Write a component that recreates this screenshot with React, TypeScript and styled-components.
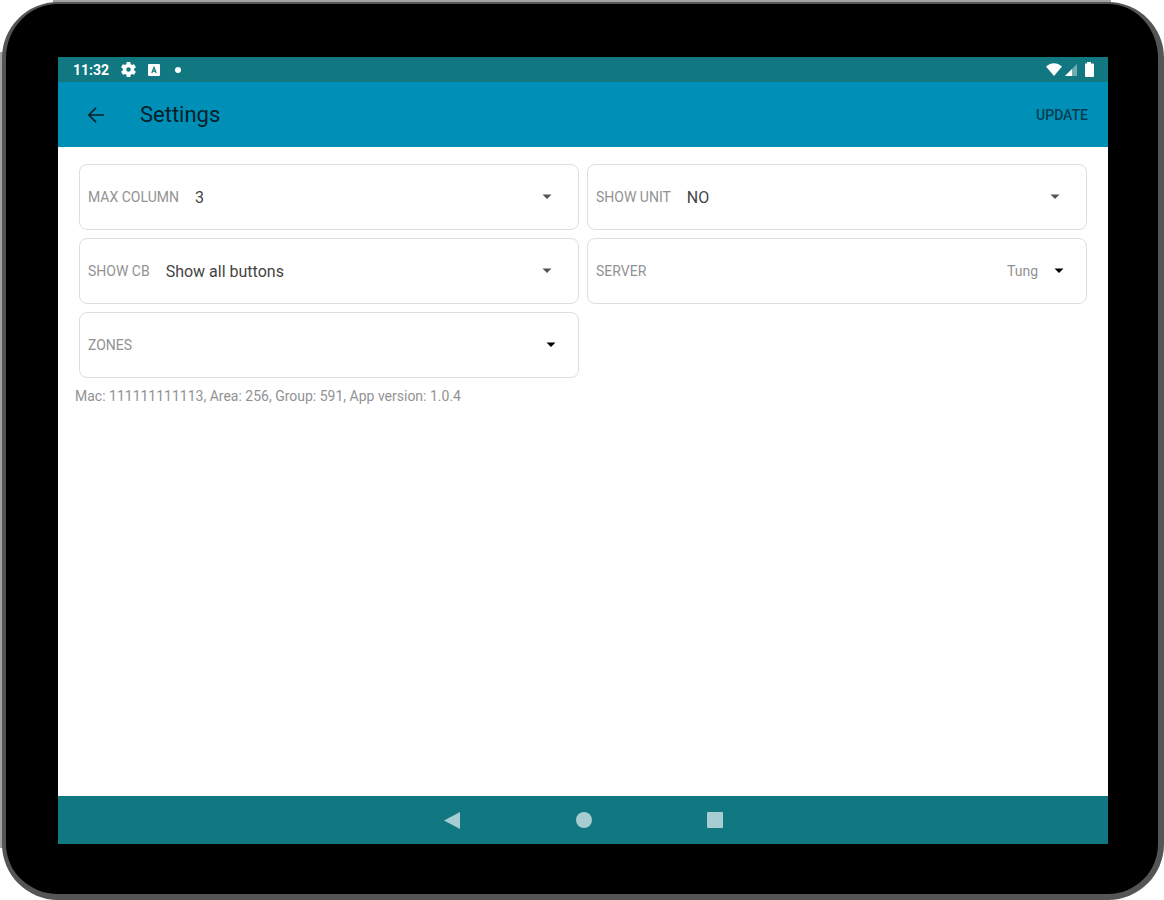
import React from "react";
import styled, { createGlobalStyle } from "styled-components";

const GlobalStyle = createGlobalStyle`
  *, *::before, *::after { box-sizing: border-box; }
  body {
    margin: 0;
    background: #fff;
    font-family: Roboto, "Liberation Sans", sans-serif;
  }
`;

const Tablet = styled.div`
  position: relative;
  display: flex;
  min-height: 100vh;
  padding: 2px 0 0 2px;

  &::before,
  &::after {
    content: "";
    position: absolute;
    background: #a3a3a3;
  }
  &::before { top: 0; left: 53px; right: 53px; height: 6px; }
  &::after { left: 0; top: 52px; bottom: 52px; width: 6px; }
`;

const Bezel = styled.div`
  position: relative;
  z-index: 1;
  flex: 1;
  display: flex;
  padding: 53px 50px 50px 52px;
  background: #000;
  border: solid #555;
  border-width: 2px 6px 6px 4px;
  border-radius: 56px;
`;

const Screen = styled.div`
  flex: 1;
  min-width: 0;
  display: flex;
  flex-direction: column;
  background: #fff;
`;

const StatusBar = styled.div`
  display: flex;
  align-items: center;
  justify-content: space-between;
  height: 25px;
  padding: 0 14px 0 15px;
  background: #117780;
  color: #fff;
`;

const StatusGroup = styled.div<{ $gap: number }>`
  display: flex;
  align-items: center;
  gap: ${(p) => p.$gap}px;
`;

const Clock = styled.time`
  font-size: 14px;
  line-height: 24px;
  font-weight: 700;
`;

const Dot = styled.span`
  width: 6px;
  height: 6px;
  margin-left: 3px;
  border-radius: 50%;
  background: #fff;
`;

const Toolbar = styled.header`
  display: flex;
  align-items: center;
  height: 65px;
  padding: 0 20px 0 28px;
  background: #008fb7;
`;

const BackButton = styled.button`
  display: flex;
  padding: 0;
  border: 0;
  background: none;
  color: #06212a;
`;

const Title = styled.h1`
  flex: 1;
  margin: 0 0 0 34px;
  font-size: 22px;
  line-height: 28px;
  font-weight: 400;
  color: #06212a;
`;

const UpdateButton = styled.button`
  padding: 0;
  border: 0;
  background: none;
  font: 500 14px/20px Roboto, "Liberation Sans", sans-serif;
  color: #063e50;
`;

const Content = styled.main`
  flex: 1;
  padding: 17px 21px;
`;

const Grid = styled.div`
  display: grid;
  grid-template-columns: 1fr 1fr;
  gap: 8px;
`;

const Card = styled.div<{ $inset: number }>`
  display: flex;
  align-items: center;
  height: 66px;
  padding: 0 ${(p) => p.$inset}px 0 8px;
  border: 1px solid #dedede;
  border-radius: 8px;
`;

const Label = styled.label`
  font-size: 14px;
  line-height: 20px;
  color: #929292;
`;

const Select = styled.select<{ $end?: boolean }>`
  flex: 1;
  min-width: 0;
  height: 40px;
  margin: 0 16px;
  padding: 0;
  appearance: none;
  border: 0;
  background: none;
  font-family: inherit;
  font-size: ${(p) => (p.$end ? 14 : 16)}px;
  color: ${(p) => (p.$end ? "#929292" : "#444")};
  text-align-last: ${(p) => (p.$end ? "right" : "left")};
`;

const Info = styled.p`
  margin: 8px 0 0 -4px;
  font-size: 14px;
  line-height: 20px;
  color: #929292;
`;

const NavBar = styled.nav`
  display: flex;
  align-items: center;
  justify-content: center;
  gap: 107px;
  height: 48px;
  background: #117780;
`;

const NavButton = styled.button`
  display: flex;
  padding: 4px;
  border: 0;
  background: none;
  color: #a6cdd1;
`;

function Caret({ color }: { color: string }) {
  return (
    <svg width="10" height="6" viewBox="0 0 10 6" aria-hidden="true">
      <path d="M.5 .5h9L5 5z" fill={color} />
    </svg>
  );
}

type Field = { id: string; label: string; value: string; boxed?: boolean };

const fields: Field[] = [
  { id: "max-column", label: "MAX COLUMN", value: "3" },
  { id: "show-unit", label: "SHOW UNIT", value: "NO" },
  { id: "show-cb", label: "SHOW CB", value: "Show all buttons" },
  { id: "server", label: "SERVER", value: "Tung", boxed: true },
  { id: "zones", label: "ZONES", value: "", boxed: true },
];

function SettingField({ id, label, value, boxed }: Field) {
  return (
    <Card $inset={boxed ? 22 : 26}>
      <Label htmlFor={id}>{label}</Label>
      <Select id={id} $end={boxed} defaultValue={value}>
        <option value={value}>{value}</option>
      </Select>
      <Caret color={boxed ? "#000" : "#555"} />
    </Card>
  );
}

export default function App() {
  return (
    <>
      <GlobalStyle />
      <Tablet>
        <Bezel>
          <Screen>
            <StatusBar>
              <StatusGroup $gap={12}>
                <Clock>11:32</Clock>
                <svg width="15" height="15" viewBox="2 2 20 20" fill="#fff" aria-hidden="true">
                  <path d="M19.43 12.98c.04-.32.07-.64.07-.98s-.03-.66-.07-.98l2.11-1.65c.19-.15.24-.42.12-.64l-2-3.46c-.12-.22-.39-.3-.61-.22l-2.49 1c-.52-.4-1.08-.73-1.69-.98l-.38-2.65A.49.49 0 0 0 14 2h-4c-.25 0-.46.18-.49.42l-.38 2.65c-.61.25-1.17.59-1.69.98l-2.49-1c-.23-.09-.49 0-.61.22l-2 3.46c-.13.22-.07.49.12.64l2.11 1.65c-.04.32-.07.65-.07.98s.03.66.07.98l-2.11 1.65c-.19.15-.24.42-.12.64l2 3.46c.12.22.39.3.61.22l2.49-1c.52.4 1.08.73 1.69.98l.38 2.65c.03.24.24.42.49.42h4c.25 0 .46-.18.49-.42l.38-2.65c.61-.25 1.17-.59 1.69-.98l2.49 1c.23.09.49 0 .61-.22l2-3.46c.12-.22.07-.49-.12-.64zM12 15a3 3 0 1 1 0-6 3 3 0 0 1 0 6z" />
                </svg>
                <svg width="12" height="12" viewBox="0 0 12 12" aria-hidden="true">
                  <rect width="12" height="12" rx="1" fill="#fff" />
                  <path d="M3.8 9 6 3.4 8.2 9M4.6 7.2h2.8" fill="none" stroke="#117780" strokeWidth="1.2" />
                </svg>
                <Dot />
              </StatusGroup>
              <StatusGroup $gap={3}>
                <svg width="16" height="13" viewBox="0 0 16 13" aria-hidden="true">
                  <path d="M0 3.5C5-1 11-1 16 3.5L8 13z" fill="#fff" />
                </svg>
                <svg width="12" height="12" viewBox="0 0 12 12" aria-hidden="true">
                  <path d="M12 0v12H0z" fill="#fff" opacity=".4" />
                  <path d="M7 5v7H0z" fill="#fff" />
                </svg>
                <svg width="14" height="15" viewBox="0 0 14 15" aria-hidden="true">
                  <path d="M5 1.500h2V0h4v1.500h2a1 1 0 0 1 1 1V14a1 1 0 0 1-1 1H6a1 1 0 0 1-1-1z" fill="#fff" />
                </svg>
              </StatusGroup>
            </StatusBar>
            <Toolbar>
              <BackButton type="button" aria-label="Back">
                <svg width="20" height="20" viewBox="0 0 20 20" fill="none" stroke="currentColor" strokeWidth="1.7" aria-hidden="true">
                  <path d="M18 10H3.500M10 2.800 2.800 10l7.200 7.200" />
                </svg>
              </BackButton>
              <Title>Settings</Title>
              <UpdateButton type="button">UPDATE</UpdateButton>
            </Toolbar>
            <Content>
              <Grid>
                {fields.map((field) => (
                  <SettingField key={field.id} {...field} />
                ))}
              </Grid>
              <Info>Mac: 111111111113, Area: 256, Group: 591, App version: 1.0.4</Info>
            </Content>
            <NavBar>
              <NavButton type="button" aria-label="Back">
                <svg width="17" height="17" viewBox="0 0 17 17" aria-hidden="true">
                  <path d="M0 8.500 16 0v17z" fill="currentColor" />
                </svg>
              </NavButton>
              <NavButton type="button" aria-label="Home">
                <svg width="16" height="16" viewBox="0 0 16 16" aria-hidden="true">
                  <circle cx="8" cy="8" r="8" fill="currentColor" />
                </svg>
              </NavButton>
              <NavButton type="button" aria-label="Recent apps">
                <svg width="16" height="16" viewBox="0 0 16 16" aria-hidden="true">
                  <rect width="16" height="16" rx="1" fill="currentColor" />
                </svg>
              </NavButton>
            </NavBar>
          </Screen>
        </Bezel>
      </Tablet>
    </>
  );
}
